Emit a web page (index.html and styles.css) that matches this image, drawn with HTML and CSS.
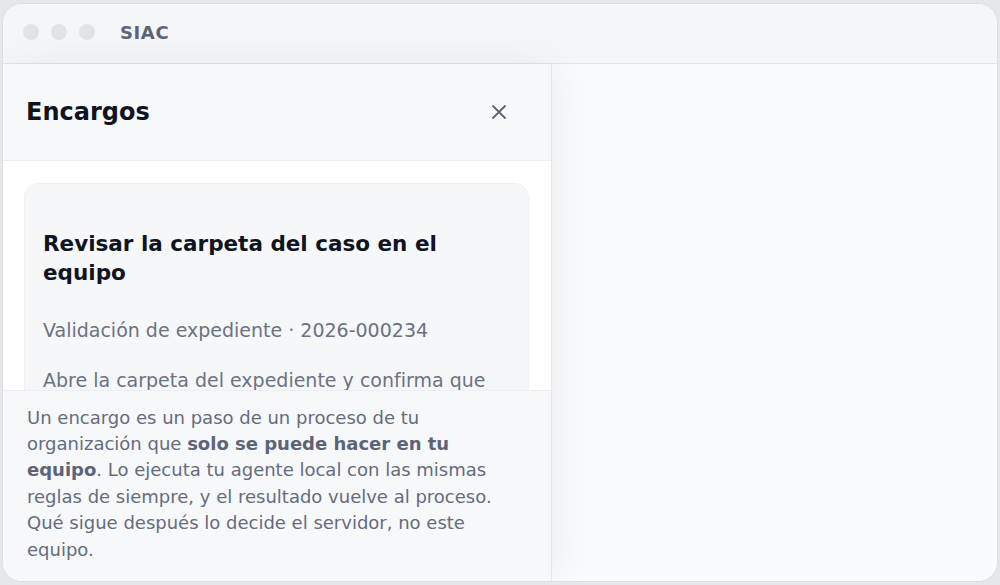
FILE: index.html
```html
<!DOCTYPE html>
<html lang="es">
<head>
<meta charset="utf-8">
<title>SIAC</title>
<link rel="stylesheet" href="styles.css">
</head>
<body>
<div class="window">
  <div class="titlebar">
    <div class="dots"><span class="dot"></span><span class="dot"></span><span class="dot"></span></div>
    <div class="app-name">SIAC</div>
  </div>
  <div class="main">
    <aside class="panel">
      <div class="panel-header">
        <h1 class="panel-title">Encargos</h1>
        <button class="close" aria-label="Cerrar">
          <svg width="16" height="16" viewBox="0 0 16 16"><path d="M2 2 L14 14 M14 2 L2 14" stroke="#5b6478" stroke-width="1.8" stroke-linecap="round" fill="none"/></svg>
        </button>
      </div>
      <div class="panel-body">
        <div class="card">
          <h2 class="card-title">Revisar la carpeta del caso en el equipo</h2>
          <p class="card-meta">Validación de expediente · 2026-000234</p>
          <p class="card-desc">Abre la carpeta del expediente y confirma que están todos los documentos necesarios antes de continuar.</p>
        </div>
      </div>
      <div class="panel-footer">
        <p>Un encargo es un paso de un proceso de tu organización que <strong>solo se puede hacer en tu equipo</strong>. Lo ejecuta tu agente local con las mismas reglas de siempre, y el resultado vuelve al proceso. Qué sigue después lo decide el servidor, no este equipo.</p>
      </div>
    </aside>
    <div class="content"></div>
  </div>
</div>
</body>
</html>
```

FILE: styles.css
```css
* { box-sizing: border-box; }
html, body { margin: 0; height: 100%; }
body {
  background: #e6e7ea;
  padding: 3px 2px 3px 2px;
  font-family: "DejaVu Sans", Verdana, sans-serif;
}
.window {
  height: 579px;
  border: 1px solid #dcdee2;
  border-radius: 20px;
  background: #f5f6f8;
  overflow: hidden;
  display: flex;
  flex-direction: column;
}
.titlebar {
  height: 60px;
  flex: none;
  display: flex;
  align-items: center;
  padding: 0 0 3px 20px;
  border-bottom: 1px solid #e2e4e8;
  background: #f5f6f8;
}
.dots { display: flex; gap: 12px; }
.dot {
  width: 16px; height: 16px; border-radius: 50%;
  background: #e1e3e7;
}
.app-name {
  margin-left: 25px;
  font-size: 18px;
  font-weight: bold;
  letter-spacing: 0.6px;
  color: #5b6478;
}
.main {
  flex: 1;
  display: flex;
  min-height: 0;
}
.panel {
  width: 549px;
  flex: none;
  display: flex;
  flex-direction: column;
  background: #fff;
  border-right: 1px solid #e4e6ea;
  box-shadow: 6px 0 40px rgba(15, 23, 42, 0.06);
  position: relative;
  z-index: 1;
}
.panel-header {
  height: 97px;
  flex: none;
  display: flex;
  align-items: center;
  justify-content: space-between;
  padding: 0 40px 0 23px;
  background: #f7f8fa;
  border-bottom: 1px solid #eceef1;
}
.panel-title {
  margin: 0;
  font-size: 24px;
  font-weight: bold;
  color: #0f1420;
}
.close {
  border: 0;
  background: none;
  padding: 0;
  width: 24px; height: 24px;
  display: flex; align-items: center; justify-content: center;
  cursor: pointer;
}
.panel-body {
  flex: 1;
  min-height: 0;
  overflow: hidden;
  padding: 22px 22px 0 21px;
}
.card {
  background: #f6f7f9;
  border: 1px solid #eef0f3;
  border-radius: 14px;
  padding: 45px 17px 20px 18px;
}
.card-title {
  margin: 0;
  font-size: 21.5px;
  font-weight: bold;
  line-height: 29px;
  color: #0f1420;
}
.card-meta {
  margin: 30px 0 0 0;
  font-size: 19px;
  line-height: 27px;
  color: #6b7282;
}
.card-desc {
  margin: 23px 0 0 0;
  font-size: 19px;
  line-height: 27px;
  color: #6b7282;
}
.panel-footer {
  flex: none;
  background: #f7f8fa;
  border-top: 1px solid #eceef1;
  padding: 14px 24px 18px 24px;
}
.panel-footer p {
  margin: 0;
  font-size: 18px;
  line-height: 26.4px;
  color: #646c7e;
}
.panel-footer strong { color: #5b6478; }
.content {
  flex: 1;
  background: #fafbfc;
}
```
